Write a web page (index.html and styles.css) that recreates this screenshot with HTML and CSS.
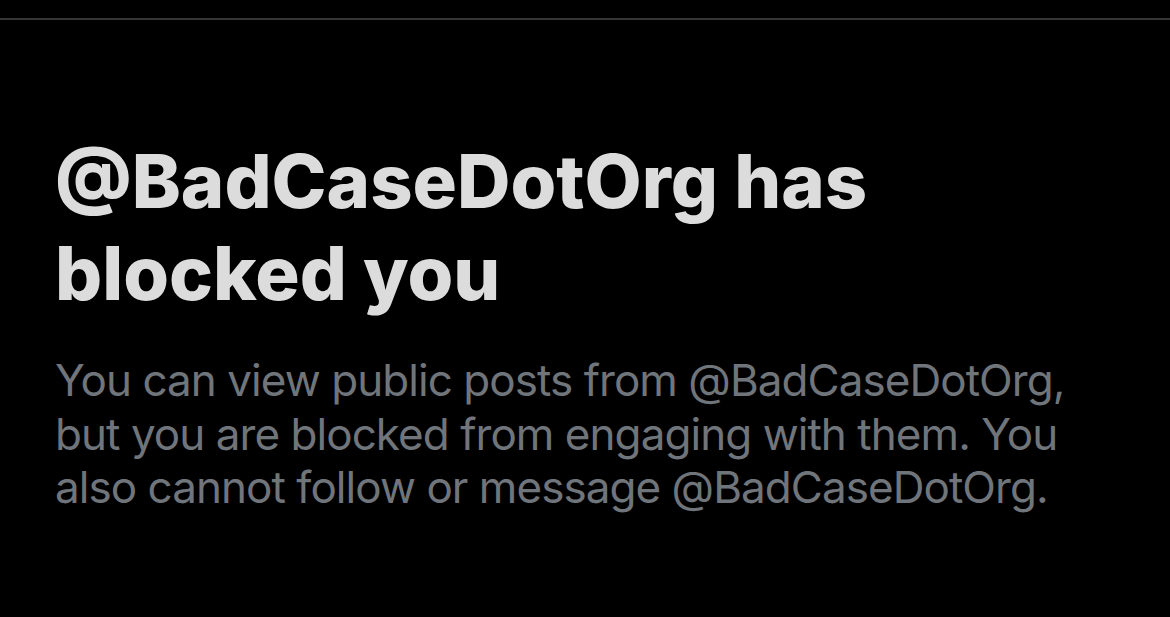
FILE: index.html
```html
<!DOCTYPE html>
<html>
<head>
<meta charset="utf-8">
<link rel="stylesheet" href="styles.css">
</head>
<body>
<div class="page">
  <div class="divider"></div>
  <main class="notice">
    <h1 class="title">@BadCaseDotOrg has blocked you</h1>
    <p class="desc">You can view public posts from @BadCaseDotOrg, but you are blocked from engaging with them. You also cannot follow or message @BadCaseDotOrg.</p>
  </main>
</div>
</body>
</html>
```
FILE: styles.css
```css
html, body {
  margin: 0;
  padding: 0;
  background: #000;
}
.page {
  width: 1170px;
  height: 617px;
  overflow: hidden;
  background: #000;
  padding-top: 18px;
  box-sizing: border-box;
}
.divider {
  height: 2px;
  background: #363636;
}
.notice {
  padding: 115px 55px 0 55px;
}
.title {
  margin: 0;
  width: 900px;
  font-family: Inter, "Liberation Sans", sans-serif;
  font-weight: 800;
  font-size: 74px;
  line-height: 92px;
  letter-spacing: 0;
  color: #dcdcdc;
}
.desc {
  margin: 35px 0 0 0;
  width: 1020px;
  font-family: Inter, "Liberation Sans", sans-serif;
  font-weight: 400;
  font-size: 44px;
  line-height: 53.5px;
  letter-spacing: -0.95px;
  color: #6f757b;
}
```
